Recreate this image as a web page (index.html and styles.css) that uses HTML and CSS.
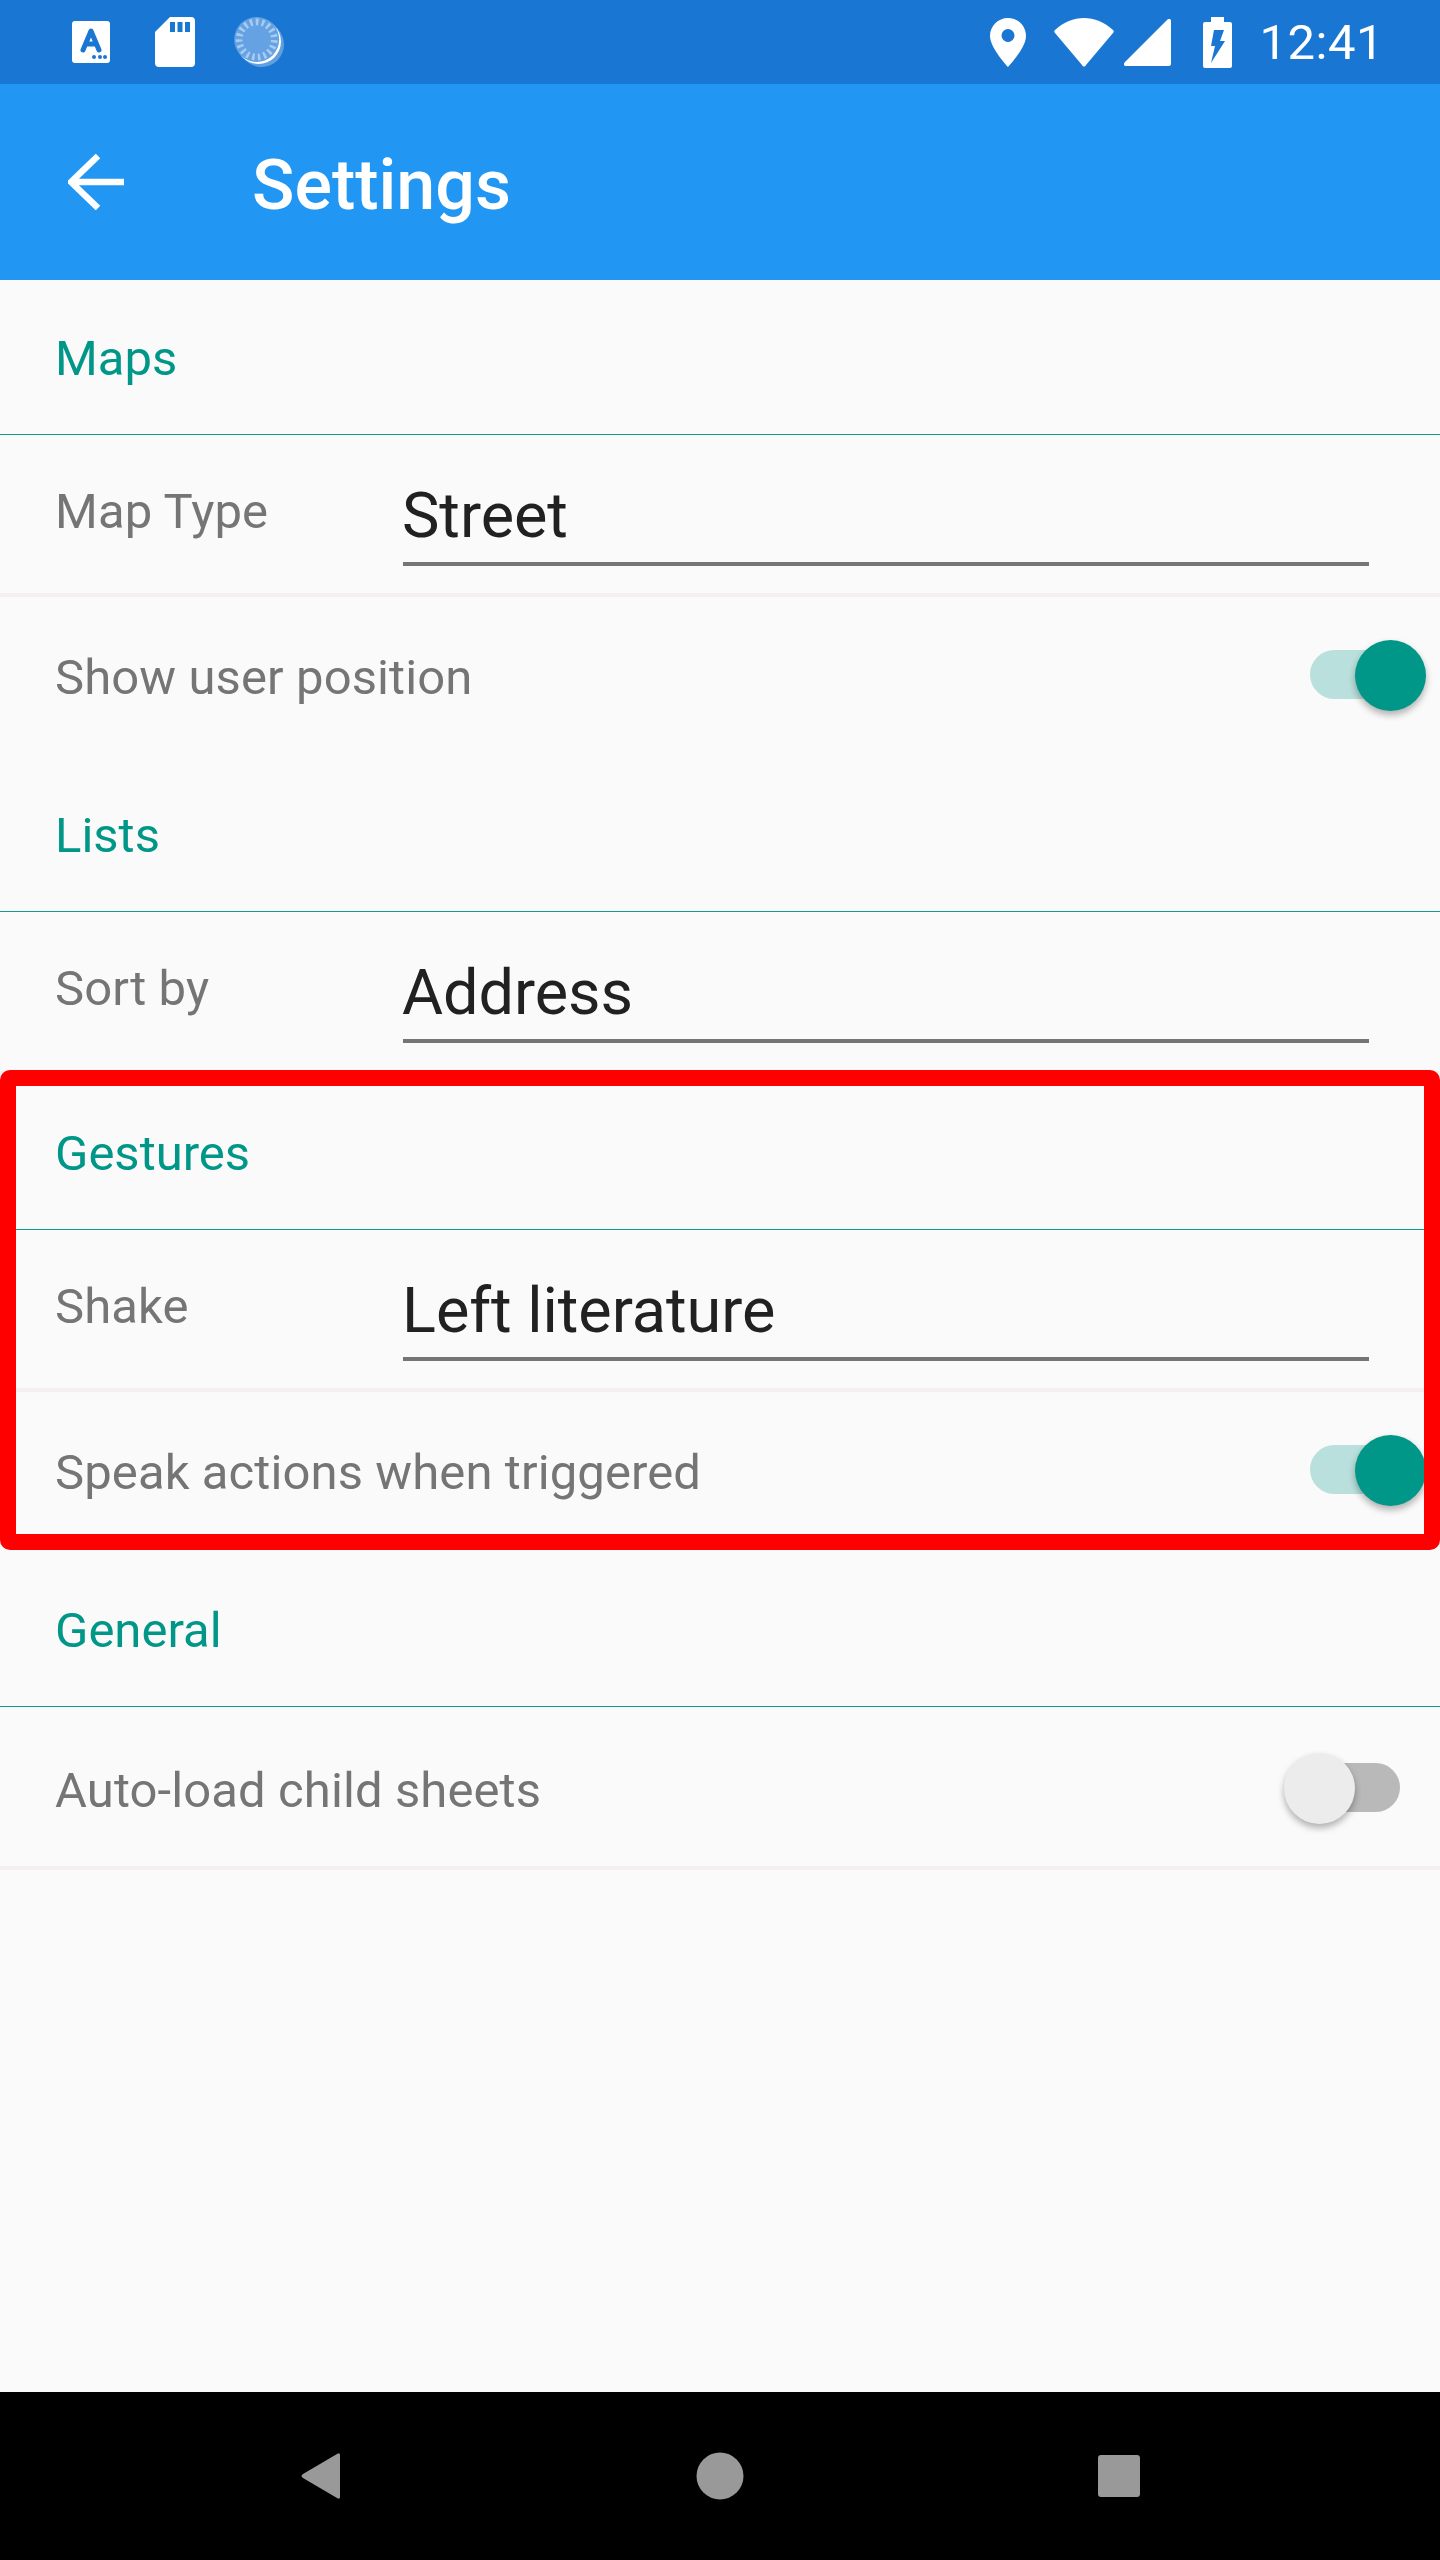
FILE: index.html
```html
<!DOCTYPE html>
<html lang="en">
<head>
    <meta charset="UTF-8">
    <meta name="viewport" content="width=device-width, initial-scale=1.0">
    <title>Settings</title>
    <link rel="stylesheet" href="styles.css">
</head>
<body>
    <div class="status-bar">
        <div class="status-left">
            <svg class="icon-a" width="38" height="42" viewBox="0 0 38 42">
                <rect width="38" height="42" rx="3" fill="#fff"/>
                <path d="M11 29 L19 10 L27 29 M14 23 H24" fill="none" stroke="#1976D2" stroke-width="5" stroke-linecap="round" stroke-linejoin="round"/>
                <circle cx="22" cy="36" r="2" fill="#1976D2"/>
                <circle cx="28" cy="36" r="2" fill="#1976D2"/>
                <circle cx="33" cy="36" r="2" fill="#1976D2"/>
            </svg>
            <svg class="icon-sd" width="40" height="50" viewBox="0 0 40 50">
                <path d="M15 0 H36 Q40 0 40 4 V46 Q40 50 36 50 H4 Q0 50 0 46 V15 Z" fill="#fff"/>
                <rect x="15" y="5" width="5" height="10" fill="#1976D2"/>
                <rect x="22.500" y="5" width="5" height="10" fill="#1976D2"/>
                <rect x="30" y="5" width="5" height="10" fill="#1976D2"/>
            </svg>
            <svg class="icon-sync" width="50" height="50" viewBox="0 0 50 50">
                <circle cx="27.500" cy="27.500" r="22.500" fill="#5F9FE2"/>
                <circle cx="24.500" cy="24.500" r="22.500" fill="#fff"/>
                <circle cx="22.700" cy="22.500" r="22.500" fill="#64A2E3"/>
                <circle cx="22.700" cy="22.500" r="17.500" fill="none" stroke="#A9CBEF" stroke-width="7" stroke-dasharray="2.500 3.230" transform="rotate(-92 22.700 22.500)"/>
                <circle cx="22.700" cy="22.500" r="14" fill="#64A2E3"/>
            </svg>
        </div>
        <div class="status-right">
            <svg class="icon-pin" width="36" height="49" viewBox="0 0 36 49">
                <path fill-rule="evenodd" d="M18 0 C8 0 0 8 0 18 C0 30 18 49 18 49 C18 49 36 30 36 18 C36 8 28 0 18 0 Z M18 11 A6.500 6.500 0 1 1 18 24 A6.500 6.500 0 1 1 18 11 Z" fill="#fff"/>
            </svg>
            <svg class="icon-wifi" width="60" height="49" viewBox="0 0 60 49">
                <path d="M1 12 C18 -4 42 -4 59 12 C60 13 60 14 59 15 L32 47 C31 49 29 49 28 47 L1 15 C0 14 0 13 1 12 Z" fill="#fff"/>
            </svg>
            <svg class="icon-signal" width="47" height="47" viewBox="0 0 47 47">
                <path d="M43 1 C45 -1 47 0 47 2 V45 C47 46 46 47 45 47 H2 C0 47 -1 45 1 43 Z" fill="#fff"/>
            </svg>
            <svg class="icon-battery" width="29" height="51" viewBox="0 0 29 51">
                <path d="M8 0 H21 V5 H27 Q29 5 29 7 V49 Q29 51 27 51 H2 Q0 51 0 49 V7 Q0 5 2 5 H8 Z" fill="#fff"/>
                <path d="M11 13 H21 L17 24 H22 L8 46 L12 29 H8 Z" fill="#1976D2"/>
            </svg>
            <span class="clock">12:41</span>
        </div>
    </div>

    <div class="app-bar">
        <svg class="back-arrow" width="56" height="56" viewBox="0 0 56 56">
            <path d="M56 28 H3 M30 2 L3 28 L30 54" fill="none" stroke="#fff" stroke-width="6.500"/>
        </svg>
        <h1>Settings</h1>
    </div>

    <div class="content">
        <div class="section-title">Maps</div>
        <div class="row picker-row divided">
            <div class="label">Map Type</div>
            <div class="value">Street</div>
        </div>
        <div class="row switch-row">
            <div class="label">Show user position</div>
            <div class="switch on"><div class="thumb"></div></div>
        </div>

        <div class="section-title">Lists</div>
        <div class="row picker-row divided last-row">
            <div class="label">Sort by</div>
            <div class="value">Address</div>
        </div>

        <div class="section-title">Gestures</div>
        <div class="row picker-row divided">
            <div class="label">Shake</div>
            <div class="value">Left literature</div>
        </div>
        <div class="row switch-row">
            <div class="label">Speak actions when triggered</div>
            <div class="switch on"><div class="thumb"></div></div>
        </div>

        <div class="section-title">General</div>
        <div class="row switch-row divided last-row">
            <div class="label">Auto-load child sheets</div>
            <div class="switch"><div class="thumb"></div></div>
        </div>
    </div>

    <div class="nav-bar">
        <svg width="60" height="48" viewBox="0 0 60 48">
            <path d="M12 22 L46 2 Q49 0 49 3 V45 Q49 48 46 46 L12 26 Q9 24 12 22 Z" fill="#999"/>
        </svg>
        <svg width="60" height="48" viewBox="0 0 60 48">
            <circle cx="30" cy="24" r="23.500" fill="#999"/>
        </svg>
        <svg width="60" height="48" viewBox="0 0 60 48">
            <rect x="9" y="3" width="42" height="42" rx="3" fill="#999"/>
        </svg>
    </div>

    <div class="highlight"></div>
</body>
</html>
```

FILE: styles.css
```css
* {
    margin: 0;
    padding: 0;
    box-sizing: border-box;
    font-family: Roboto, sans-serif;
}

body {
    width: 1440px;
    height: 2560px;
    display: flex;
    flex-direction: column;
    background: #FAFAFA;
    overflow: hidden;
}

.status-bar {
    height: 84px;
    flex-shrink: 0;
    display: flex;
    align-items: center;
    justify-content: space-between;
    padding: 0 56px 0 72px;
    background: #1976D2;
}

.status-left,
.status-right {
    display: flex;
    align-items: center;
}

.icon-sd {
    margin-left: 45px;
}

.icon-sync {
    margin-left: 39px;
}

.icon-wifi {
    margin-left: 28px;
}

.icon-signal {
    margin-left: 10px;
}

.icon-battery {
    margin-left: 32px;
}

.clock {
    margin-left: 27px;
    font-size: 49px;
    letter-spacing: 0.5px;
    color: #fff;
}

.app-bar {
    height: 196px;
    flex-shrink: 0;
    display: flex;
    align-items: center;
    padding-left: 68px;
    background: #2196F3;
}

.app-bar h1 {
    margin: 5px 0 0 128px;
    font-size: 70px;
    font-weight: 500;
    color: #fff;
}

.content {
    flex: 1;
}

.section-title {
    height: 155px;
    padding: 50px 0 0 55px;
    font-size: 49px;
    line-height: 58px;
    color: #009688;
    border-bottom: 1px solid #129A8E;
}

.row {
    display: flex;
    align-items: center;
    padding-left: 55px;
}

.divided {
    border-bottom: 4px solid #F5EFEF;
}

.picker-row {
    height: 162px;
    padding-right: 71px;
}

.switch-row {
    height: 160px;
    justify-content: space-between;
    padding-right: 40px;
}

.row.last-row {
    height: 163px;
}

.switch-row.last-row {
    padding-top: 8px;
}

.label {
    font-size: 49px;
    letter-spacing: 0.1px;
    color: #757575;
}

.picker-row .label {
    width: 348px;
    margin-bottom: 6px;
}

.value {
    flex: 1;
    height: 98px;
    margin-top: 6px;
    font-size: 63px;
    line-height: 95px;
    text-indent: -1px;
    letter-spacing: -0.05px;
    color: #212121;
    border-bottom: 4px solid #757575;
}

.last-row .value {
    margin-top: 4px;
}

.switch {
    position: relative;
    width: 90px;
    height: 49px;
    margin-bottom: 6px;
    border-radius: 25px;
    background: #B9B9B9;
}

.switch.on {
    background: #B9E0DC;
}

.thumb {
    position: absolute;
    top: -10px;
    left: -26px;
    width: 71px;
    height: 71px;
    border-radius: 50%;
    background: #ECECEC;
    box-shadow: 0 4px 7px rgba(0, 0, 0, 0.3);
}

.switch.on .thumb {
    left: 45px;
    background: #009688;
}

.nav-bar {
    height: 168px;
    flex-shrink: 0;
    display: flex;
    align-items: center;
    justify-content: center;
    gap: 339px;
    background: #000;
}

.highlight {
    position: absolute;
    top: 1070px;
    left: 0;
    width: 1440px;
    height: 480px;
    border: 16px solid #f00;
    border-radius: 10px;
}
```
